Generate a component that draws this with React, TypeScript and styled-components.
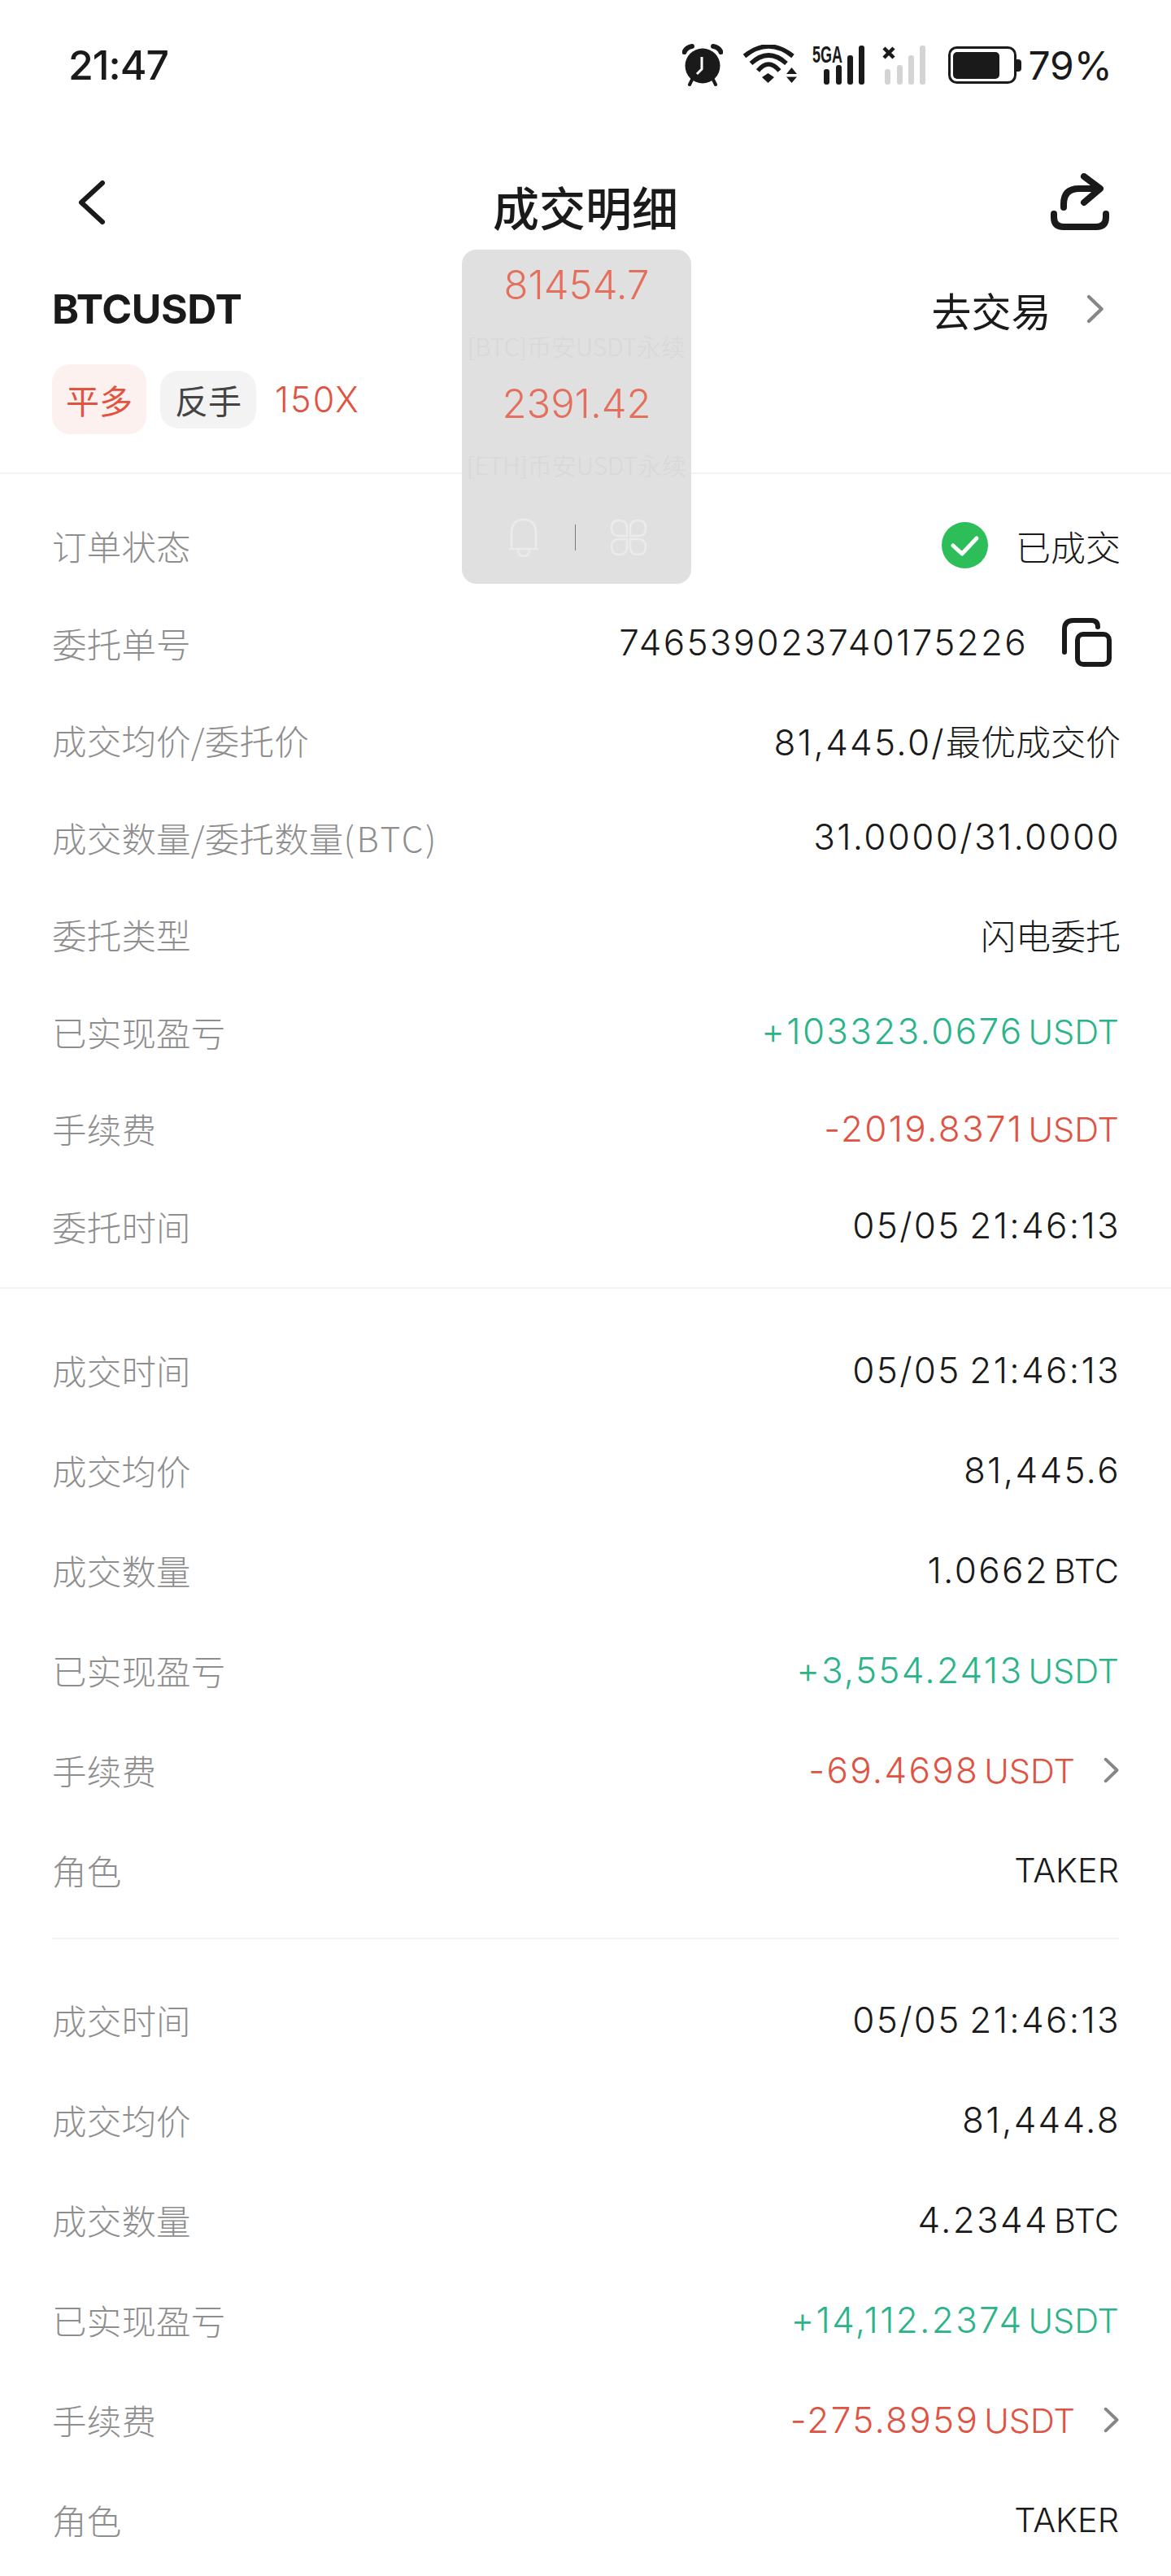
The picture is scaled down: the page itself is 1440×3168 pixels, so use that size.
import React from 'react'
import styled, { createGlobalStyle } from 'styled-components'

const GlobalStyle = createGlobalStyle`
  html, body {
    margin: 0;
    background: #fff;
  }
  body {
    width: 1440px;
    height: 3168px;
    overflow: hidden;
    font-family: Inter, 'Noto Sans CJK SC', sans-serif;
  }
`

const Page = styled.div`
  position: relative;
  width: 1440px;
  height: 3168px;
  overflow: hidden;
  background: #fff;
  color: #1a1a1a;
`

const StatusBar = styled.div`
  display: flex;
  align-items: center;
  justify-content: space-between;
  height: 60px;
  padding: 50px 72px 0 84px;
`

const Time = styled.span`
  font-size: 50px;
  font-weight: 500;
  letter-spacing: -1px;
`

const StatusIcons = styled.div`
  display: flex;
  align-items: center;
`

const IconGap = styled.span<{ $w: number }>`
  width: ${({ $w }) => $w}px;
`

const Percent = styled.span`
  font-size: 48px;
  font-weight: 400;
  margin-left: 8px;
`

const NavBar = styled.div`
  display: grid;
  grid-template-columns: 1fr auto 1fr;
  align-items: center;
  height: 72px;
  margin-top: 94px;
  padding: 0 76px;
`

const NavStart = styled.div`
  display: flex;
  padding-left: 20px;
`

const NavEnd = styled.div`
  display: flex;
  justify-content: flex-end;
`

const Title = styled.h1`
  margin: 8px 0 0;
  font-size: 57px;
  font-weight: 500;
  font-family: 'Noto Sans CJK SC', sans-serif;
`

const SymbolRow = styled.div`
  display: flex;
  align-items: center;
  justify-content: space-between;
  height: 60px;
  margin-top: 74px;
  padding: 0 82px 0 64px;
`

const Symbol = styled.span`
  font-size: 50px;
  font-weight: 700;
  letter-spacing: -0.4px;
`

const TradeLink = styled.span`
  display: flex;
  align-items: center;
  gap: 44px;
  font-size: 49px;
  font-family: 'Noto Sans CJK SC', sans-serif;
  font-weight: 400;
`

const TagRow = styled.div`
  display: flex;
  align-items: center;
  gap: 17px;
  height: 86px;
  margin-top: 38px;
  padding: 0 64px 47px;
`

const Tag = styled.span<{ $tone: 'red' | 'grey' }>`
  display: flex;
  align-items: center;
  justify-content: center;
  width: ${({ $tone }) => ($tone === 'red' ? 116 : 118)}px;
  height: ${({ $tone }) => ($tone === 'red' ? 86 : 71)}px;
  border-radius: 22px;
  font-size: 41px;
  font-family: 'Noto Sans CJK SC', sans-serif;
  font-weight: 400;
  color: ${({ $tone }) => ($tone === 'red' ? '#e2533f' : '#444')};
  background: ${({ $tone }) => ($tone === 'red' ? '#fdf1f0' : '#f3f3f3')};
`

const Leverage = styled.span`
  margin-left: 6px;
  font-size: 43px;
  font-weight: 300;
  letter-spacing: 2.2px;
  color: #e2533f;
`

const Section = styled.section<{ $top: number; $bottom: number }>`
  padding: ${({ $top, $bottom }) => `${$top}px 64px ${$bottom}px`};
`

const FullRule = styled.div`
  height: 2px;
  background: #f4f4f4;
`

const InsetRule = styled(FullRule)`
  margin: 0 64px;
`

const Row = styled.div<{ $height: number }>`
  display: flex;
  align-items: center;
  justify-content: space-between;
  height: ${({ $height }) => $height}px;
`

const Label = styled.span`
  font-size: 42.5px;
  font-weight: 300;
  letter-spacing: 0.2px;
  color: #8e8e8e;
  font-family: 'Noto Sans CJK SC', sans-serif;
`

const LabelLatin = styled.span`
  letter-spacing: 2.6px;
`

const Value = styled.span<{ $tone?: 'up' | 'down' }>`
  display: flex;
  align-items: baseline;
  margin-right: -2px;
  font-size: 44px;
  font-weight: 300;
  letter-spacing: 2.3px;
  word-spacing: -4px;
  white-space: nowrap;
  color: ${({ $tone }) => ($tone === 'up' ? '#2bb48a' : $tone === 'down' ? '#df5343' : '#1a1a1a')};
`

const Unit = styled.span`
  margin-left: 6px;
  margin-right: 2px;
  font-size: 41.5px;
  letter-spacing: 0;
`

const Cjk = styled.span`
  font-size: 43px;
  letter-spacing: 0;
  font-weight: 300;
  font-family: 'Noto Sans CJK SC', sans-serif;
`

const WithIcon = styled.span<{ $gap: number; $inset?: number }>`
  display: flex;
  align-items: center;
  gap: ${({ $gap }) => $gap}px;
  margin-right: ${({ $inset }) => $inset ?? 0}px;
`

const FloatPanel = styled.aside`
  position: absolute;
  left: 568px;
  top: 307px;
  display: flex;
  flex-direction: column;
  align-items: center;
  width: 282px;
  height: 411px;
  border-radius: 18px;
  background: #e0e0e0;
`

const Price = styled.div<{ $mt: number }>`
  margin-top: ${({ $mt }) => $mt}px;
  font-size: 49px;
  line-height: 60px;
  font-weight: 300;
  color: #e56f5d;
`

const PanelCaption = styled.div`
  margin-top: 24px;
  height: 40px;
  font-size: 30px;
  line-height: 40px;
  font-weight: 300;
  white-space: nowrap;
  color: #d8d8d8;
  font-family: 'Noto Sans CJK SC', sans-serif;
`

const PanelIcons = styled.div`
  display: flex;
  align-items: center;
  gap: 42px;
  margin-top: 46px;
`

const PanelSep = styled.i`
  width: 1px;
  height: 32px;
  background: #777;
`

const Alarm = () => (
  <svg width="50" height="52" viewBox="0 0 50 52">
    <circle cx="25" cy="27" r="21.5" fill="#1a1a1a" />
    <path d="M2.5 10 Q5 4 12 3 M47.5 10 Q45 4 38 3" fill="none" stroke="#1a1a1a" strokeWidth="6" strokeLinecap="round" />
    <path d="M12 44 L9 50 M38 44 L41 50" stroke="#1a1a1a" strokeWidth="4" strokeLinecap="round" />
    <path d="M24 16 V31 L18 37" fill="none" stroke="#fff" strokeWidth="3" />
  </svg>
)

const Wifi = () => (
  <svg width="68" height="50" viewBox="0 0 68 50" fill="none" stroke="#1a1a1a" strokeWidth="5.5">
    <path d="M2.5 14 Q32 -10 62 14" />
    <path d="M10.5 23 Q32 3 54 23" />
    <path d="M19 32 Q32 16 45.5 32" />
    <path d="M24 40 L31.5 35 L39 40 L31.5 47 Z" fill="#1a1a1a" stroke="none" />
    <path d="M54 36 L60.5 28 L67 36 Z M54 39.5 H67 L60.5 47 Z" fill="#1a1a1a" stroke="none" />
  </svg>
)

const SignalBars = ({ color, x }: { color: string; x: number }) => (
  <g fill={color} transform={`translate(${x} 0)`}>
    <rect x="0" y="30" width="7" height="19" rx="3" />
    <rect x="15" y="25" width="7" height="24" rx="3" />
    <rect x="29" y="13" width="7" height="36" rx="3" />
    <rect x="43" y="1" width="7" height="48" rx="3" />
  </g>
)

const Signal5G = () => (
  <svg width="64" height="58" viewBox="0 -4 64 58">
    <text x="0" y="22" fontFamily="Liberation Sans, sans-serif" fontWeight="700" fontSize="29" textLength="37" lengthAdjust="spacingAndGlyphs" fill="#1a1a1a">5GA</text>
    <SignalBars color="#1a1a1a" x={14} />
  </svg>
)

const SignalOff = () => (
  <svg width="53" height="50" viewBox="0 0 53 50">
    <SignalBars color="#d4d4d4" x={3} />
    <path d="M2 4 L14 16 M14 4 L2 16" stroke="#1a1a1a" strokeWidth="4.5" />
  </svg>
)

const Battery = () => (
  <svg width="90" height="46" viewBox="0 0 90 46">
    <rect x="1.5" y="1.5" width="81" height="43" rx="9" fill="none" stroke="#1a1a1a" strokeWidth="3" />
    <rect x="6" y="7" width="57" height="33" rx="5" fill="#1a1a1a" />
    <path d="M84 16 h2 a4 4 0 0 1 4 4 v7 a4 4 0 0 1 -4 4 h-2 Z" fill="#1a1a1a" />
  </svg>
)

const BackIcon = () => (
  <svg width="34" height="56" viewBox="0 0 34 56" fill="none" stroke="#1a1a1a" strokeWidth="6" strokeLinecap="round" strokeLinejoin="round">
    <path d="M30 4 L4 28 L30 52" />
  </svg>
)

const ShareIcon = () => (
  <svg width="72" height="72" viewBox="0 0 72 72" fill="none" stroke="#1a1a1a" strokeWidth="8" strokeLinecap="round" strokeLinejoin="round">
    <path d="M4 50 V54 Q4 66 16 66 H56 Q68 66 68 54 V50" />
    <path d="M16 42 V38 Q16 19 35 19 H60" />
    <path d="M41 4 L61 19 L41 36" />
  </svg>
)

const Chevron = ({ size = 32, color = '#868686' }: { size?: number; color?: string }) => (
  <svg width={size * 0.6} height={size} viewBox="0 0 18 30" fill="none" stroke={color} strokeWidth="3.6" strokeLinecap="round" strokeLinejoin="round">
    <path d="M2.5 2.5 L15.5 15 L2.5 27.5" />
  </svg>
)

const CheckBadge = () => (
  <svg width="57" height="57" viewBox="0 0 57 57">
    <circle cx="28.5" cy="28.5" r="28.5" fill="#2dbe5a" />
    <path d="M14 29 L25 39 L43 20" fill="none" stroke="#fff" strokeWidth="5" strokeLinecap="round" strokeLinejoin="round" />
  </svg>
)

const CopyIcon = () => (
  <svg width="61" height="60" viewBox="0 0 61 60" fill="none" stroke="#1a1a1a" strokeWidth="6" strokeLinecap="round">
    <path d="M3 42 V14 Q3 3 14 3 H36 Q44 3 44 11" />
    <rect x="19" y="20" width="39" height="37" rx="7" />
  </svg>
)

const BellIcon = () => (
  <svg width="42" height="48" viewBox="0 0 42 48" fill="none" stroke="#ebebeb" strokeWidth="2.5" strokeLinejoin="round">
    <path d="M3 38 H39 M6 38 V19 Q6 2 21 2 Q36 2 36 19 V38" />
    <path d="M14 39 Q14 47 21 47 Q28 47 28 39" />
  </svg>
)

const GridIcon = () => (
  <svg width="46" height="46" viewBox="0 0 46 46" fill="none" stroke="#ebebeb" strokeWidth="2.5">
    <path d="M21 21 H11 Q2 21 2 12 Q2 2 11 2 Q21 2 21 11 Z" />
    <path d="M25 21 H35 Q44 21 44 12 Q44 2 35 2 Q25 2 25 11 Z" />
    <path d="M21 25 H11 Q2 25 2 34 Q2 44 11 44 Q21 44 21 35 Z" />
    <path d="M25 25 H35 Q44 25 44 34 Q44 44 35 44 Q25 44 25 35 Z" />
  </svg>
)

type Fill = { time: string; avg: string; qty: string; pnl: string; fee: string }

const fills: Fill[] = [
  { time: '05/05 21:46:13', avg: '81,445.6', qty: '1.0662', pnl: '+3,554.2413', fee: '-69.4698' },
  { time: '05/05 21:46:13', avg: '81,444.8', qty: '4.2344', pnl: '+14,112.2374', fee: '-275.8959' }
]

const FillRows = ({ fill }: { fill: Fill }) => (
  <>
    <Row $height={123}><Label>成交时间</Label><Value>{fill.time}</Value></Row>
    <Row $height={123}><Label>成交均价</Label><Value>{fill.avg}</Value></Row>
    <Row $height={123}><Label>成交数量</Label><Value>{fill.qty}<Unit>BTC</Unit></Value></Row>
    <Row $height={123}><Label>已实现盈亏</Label><Value $tone="up">{fill.pnl}<Unit>USDT</Unit></Value></Row>
    <Row $height={123}>
      <Label>手续费</Label>
      <WithIcon $gap={35}><Value $tone="down">{fill.fee}<Unit>USDT</Unit></Value><Chevron /></WithIcon>
    </Row>
    <Row $height={123}><Label>角色</Label><Value><Unit>TAKER</Unit></Value></Row>
  </>
)

export default function App() {
  return (
    <Page>
      <GlobalStyle />
      <StatusBar>
        <Time>21:47</Time>
        <StatusIcons>
          <Alarm />
          <IconGap $w={24} />
          <Wifi />
          <IconGap $w={18} />
          <Signal5G />
          <IconGap $w={22} />
          <SignalOff />
          <IconGap $w={28} />
          <Battery />
          <Percent>79%</Percent>
        </StatusIcons>
      </StatusBar>

      <NavBar>
        <NavStart><BackIcon /></NavStart>
        <Title>成交明细</Title>
        <NavEnd><ShareIcon /></NavEnd>
      </NavBar>

      <SymbolRow>
        <Symbol>BTCUSDT</Symbol>
        <TradeLink>去交易<Chevron size={36} /></TradeLink>
      </SymbolRow>
      <TagRow>
        <Tag $tone="red">平多</Tag>
        <Tag $tone="grey">反手</Tag>
        <Leverage>150X</Leverage>
      </TagRow>
      <FullRule />

      <Section $top={28} $bottom={16}>
        <Row $height={119.5}>
          <Label>订单状态</Label>
          <WithIcon $gap={34}><CheckBadge /><Value><Cjk>已成交</Cjk></Value></WithIcon>
        </Row>
        <Row $height={119.5}>
          <Label>委托单号</Label>
          <WithIcon $gap={44} $inset={9}><Value>746539023740175226</Value><CopyIcon /></WithIcon>
        </Row>
        <Row $height={119.5}><Label>成交均价/委托价</Label><Value>81,445.0/<Cjk>最优成交价</Cjk></Value></Row>
        <Row $height={119.5}><Label>成交数量/委托数量<LabelLatin>(BTC)</LabelLatin></Label><Value>31.0000/31.0000</Value></Row>
        <Row $height={119.5}><Label>委托类型</Label><Value><Cjk>闪电委托</Cjk></Value></Row>
        <Row $height={119.5}><Label>已实现盈亏</Label><Value $tone="up">+103323.0676<Unit>USDT</Unit></Value></Row>
        <Row $height={119.5}><Label>手续费</Label><Value $tone="down">-2019.8371<Unit>USDT</Unit></Value></Row>
        <Row $height={119.5}><Label>委托时间</Label><Value>05/05 21:46:13</Value></Row>
      </Section>
      <FullRule />

      <Section $top={38} $bottom={22}>
        <FillRows fill={fills[0]} />
      </Section>
      <InsetRule />
      <Section $top={37} $bottom={0}>
        <FillRows fill={fills[1]} />
      </Section>

      <FloatPanel>
        <Price $mt={14}>81454.7</Price>
        <PanelCaption>[BTC]币安USDT永续</PanelCaption>
        <Price $mt={22}>2391.42</Price>
        <PanelCaption>[ETH]币安USDT永续</PanelCaption>
        <PanelIcons>
          <BellIcon />
          <PanelSep />
          <GridIcon />
        </PanelIcons>
      </FloatPanel>
    </Page>
  )
}
